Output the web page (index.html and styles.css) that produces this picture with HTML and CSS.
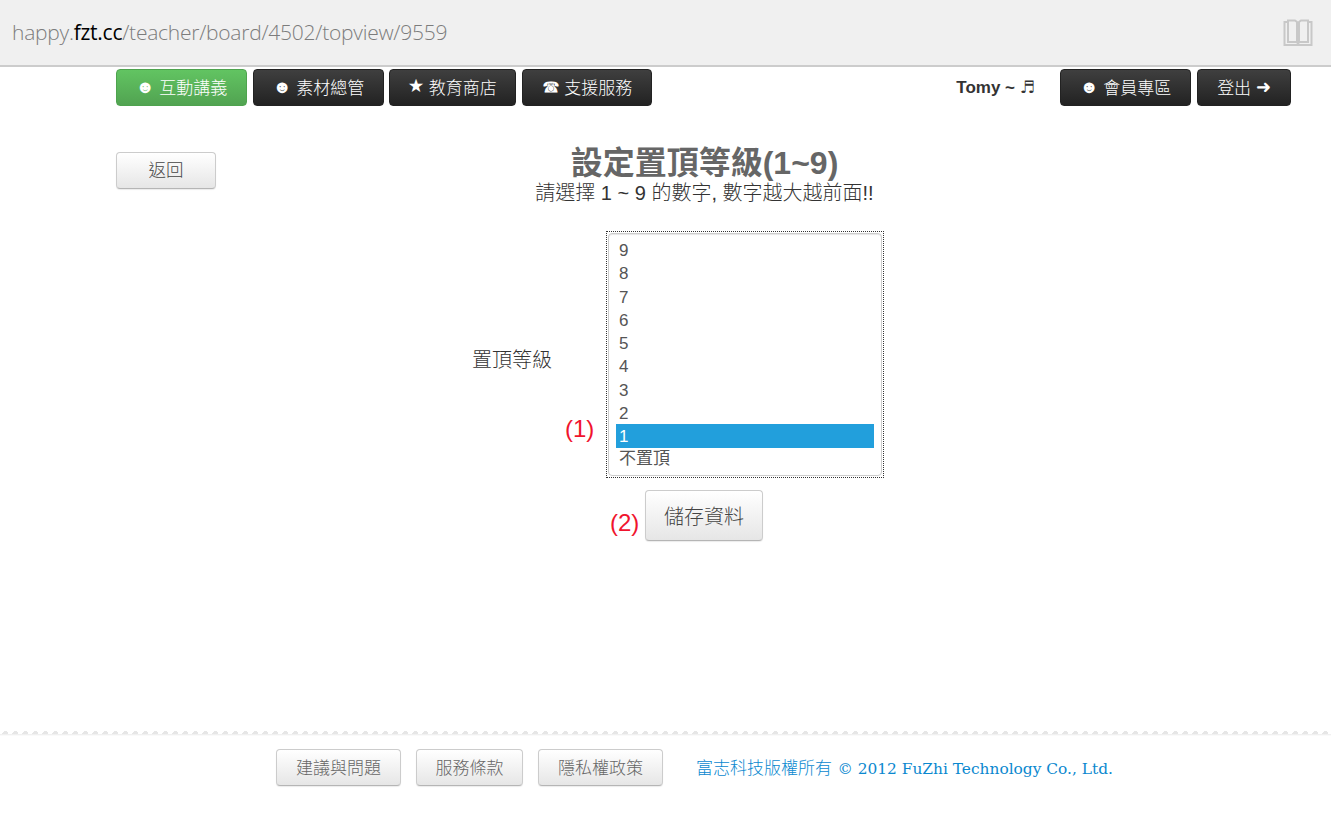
FILE: index.html
```html
<!DOCTYPE html>
<html lang="zh-Hant">
<head>
<meta charset="utf-8">
<title>設定置頂等級</title>
<link rel="stylesheet" href="styles.css">
</head>
<body>
<header class="address-bar">
  <div class="url">happy.<span class="url-host">fzt.cc</span>/teacher/board/4502/topview/9559</div>
  <svg class="reader" width="30" height="27" viewBox="0 0 30 27" fill="none" stroke="#c8c8c8" stroke-width="2">
    <path d="M5 3H1.500V26H28.500V3H25"/>
    <path d="M5 1.500H12L14 3V23H5Z"/>
    <path d="M25 1.500H18L16 3V23H25Z"/>
    <path d="M14 23L15 25L16 23"/>
  </svg>
</header>
<nav class="nav">
  <div class="nav-group">
    <a class="nav-btn nav-btn-active w131"><span class="glyph">☻</span> 互動講義</a>
    <a class="nav-btn w131 tight"><span class="glyph">☻</span> 素材總管</a>
    <a class="nav-btn w127"><span class="glyph glyph-star">★</span> 教育商店</a>
    <a class="nav-btn w130"><span class="glyph">☎</span> 支援服務</a>
  </div>
  <div class="nav-group">
    <span class="user">Tomy ~ <span class="glyph">♬</span></span>
    <a class="nav-btn w131"><span class="glyph">☻</span> 會員專區</a>
    <a class="nav-btn w94">登出 <span class="glyph">➜</span></a>
  </div>
</nav>
<main class="main">
  <div class="head">
    <a class="btn btn-back">返回</a>
    <div class="heading">
      <h1 class="title">設定置頂等級(1~9)</h1>
      <p class="subtitle">請選擇 1 ~ 9 的數字, 數字越大越前面!!</p>
    </div>
  </div>
  <form class="form">
    <div class="field">
      <label class="label">置頂等級</label>
      <span class="mark mark-one">(1)</span>
      <div class="focus-ring">
        <ul class="list">
          <li class="opt">9</li>
          <li class="opt">8</li>
          <li class="opt">7</li>
          <li class="opt">6</li>
          <li class="opt">5</li>
          <li class="opt">4</li>
          <li class="opt">3</li>
          <li class="opt">2</li>
          <li class="opt opt-selected">1</li>
          <li class="opt opt-last">不置頂</li>
        </ul>
      </div>
    </div>
    <div class="actions">
      <span class="mark mark-two">(2)</span>
      <a class="btn btn-save">儲存資料</a>
    </div>
  </form>
</main>
<footer class="footer">
  <a class="btn btn-foot w125">建議與問題</a>
  <a class="btn btn-foot w107">服務條款</a>
  <a class="btn btn-foot w125">隱私權政策</a>
  <span class="copy">富志科技版權所有 <span class="copy-latin">© 2012 FuZhi Technology Co., Ltd.</span></span>
</footer>
</body>
</html>
```
FILE: styles.css
```css
* { box-sizing: border-box; }
html, body { margin: 0; padding: 0; }
body {
  height: 815px;
  overflow: hidden;
  background: #fff;
  color: #444;
  font-family: "Liberation Sans", "Noto Sans CJK TC", sans-serif;
  display: flex;
  flex-direction: column;
}
.address-bar {
  height: 67px;
  flex: none;
  background: #f0f0f0;
  border-bottom: 2px solid #ccc;
  display: flex;
  align-items: center;
  justify-content: space-between;
  padding: 0 18px 0 12px;
}
.url {
  padding-bottom: 2px;
  font-family: "Open Sans", "Noto Sans", sans-serif;
  font-weight: 300;
  font-size: 21px;
  letter-spacing: -0.25px;
  color: #7c7c7c;
}
.url-host { color: #000; font-weight: 400; }
.reader { display: block; }
.nav {
  flex: none;
  display: flex;
  justify-content: space-between;
  margin: 2px 40px 0 116px;
}
.nav-group { display: flex; align-items: center; gap: 6px; }
.nav-btn {
  height: 37px;
  display: flex;
  align-items: center;
  justify-content: center;
  padding-bottom: 2px;
  white-space: pre;
  border-radius: 4px;
  border: 1px solid #222;
  background: linear-gradient(#3f3f3f, #222);
  color: #fff;
  font-size: 17px;
  font-weight: 300;
}
.nav-btn-active {
  border-color: #4ea34e;
  background: linear-gradient(#62c462, #51a351);
}
.tight { margin-right: -1px; }
.w131 { width: 131px; }
.w127 { width: 127px; }
.w130 { width: 130px; }
.w94 { width: 94px; }
.w125 { width: 125px; }
.w107 { width: 107px; }
.glyph { font-family: "DejaVu Sans", sans-serif; font-size: 18px; }
.glyph-star { font-size: 16px; }
.user {
  margin-right: 19px;
  font-size: 17px;
  font-weight: 700;
  color: #333;
}
.user .glyph { font-weight: 400; font-size: 17px; }
.main { flex: 1; margin: 0 40px 0 116px; }
.head {
  display: grid;
  grid-template-columns: 100px 1fr 100px;
  margin-top: 40px;
}
.btn {
  display: flex;
  align-items: center;
  justify-content: center;
  border: 1px solid #ccc;
  border-bottom-color: #b5b5b5;
  border-radius: 4px;
  background: linear-gradient(#fff, #e6e6e6);
  box-shadow: 0 1px 1px rgba(0, 0, 0, 0.08);
  color: #444;
  font-weight: 300;
}
.btn-back {
  height: 37px;
  margin-top: 6px;
  padding-bottom: 5px;
  font-size: 17.500px;
}
.heading { text-align: center; padding-left: 2px; margin-top: -1px; }
.title {
  margin: 0;
  font-size: 32px;
  line-height: 36px;
  font-weight: 700;
  color: #666;
}
.subtitle {
  margin: 0;
  font-size: 20px;
  line-height: 24px;
  color: #333;
  font-weight: 300;
}
.form { margin-top: 26px; padding-left: 356px; }
.field { display: flex; height: 247px; }
.label {
  width: 93px;
  align-self: center;
  padding-top: 8px;
  font-size: 20px;
  color: #333;
  font-weight: 300;
}
.mark {
  color: #f0142d;
  font-size: 24px;
  font-weight: 300;
  line-height: 30px;
}
.mark-one { width: 41px; align-self: flex-end; margin-bottom: 34px; }
.focus-ring {
  width: 278px;
  height: 247px;
  padding: 1px;
  border: 1px dotted #333;
}
.list {
  height: 100%;
  margin: 0;
  padding: 4px 7px;
  list-style: none;
  border: 1px solid #ccc;
  border-radius: 4px;
  box-shadow: inset 0 1px 1px rgba(0, 0, 0, 0.1);
  font-size: 17px;
  color: #555;
}
.opt {
  height: 23.300px;
  line-height: 23.300px;
  padding: 1px 0 0 3px;
}
.opt-selected {
  height: 24px;
  line-height: 24px;
  background: #229fdc;
  color: #fff;
  font-weight: 300;
}
.opt-last { line-height: 19px; }
.actions {
  display: flex;
  align-items: flex-start;
  margin: 12px 0 0 138px;
}
.mark-two { width: 35px; margin-top: 18px; }
.btn-save {
  width: 118px;
  height: 51px;
  font-size: 20px;
  color: #444;
}
.footer {
  flex: none;
  height: 85px;
  padding: 19px 0 0 276px;
  display: flex;
  align-items: flex-start;
  gap: 15px;
  background:
    conic-gradient(from 135deg at 50% 0, #e6e6e6 90deg, transparent 0) 0 0 / 10px 4px repeat-x,
    linear-gradient(#ececec, #fff) 0 4px / 100% 2px no-repeat;
}
.btn-foot { height: 37px; padding-bottom: 2px; font-size: 17px; color: #666; }
.copy {
  margin: 5px 0 0 18px;
  font-family: "DejaVu Serif", "Noto Sans CJK TC", serif;
  font-size: 17px;
  font-weight: 300;
  color: #0a88cf;
}
.copy-latin { font-size: 15.400px; }
```
